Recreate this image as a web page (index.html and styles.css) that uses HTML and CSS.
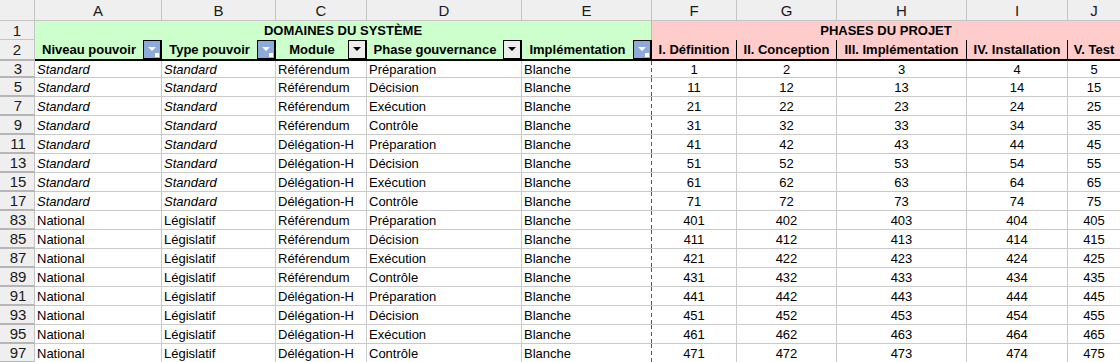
FILE: index.html
```html
<!DOCTYPE html>
<html lang="fr">
<head>
<meta charset="utf-8">
<title>Feuille</title>
<link rel="stylesheet" href="styles.css">
</head>
<body>
<div class="sheet">
  <div class="row colhdr">
    <div class="corner"></div>
    <div>A</div><div>B</div><div>C</div><div>D</div><div>E</div>
    <div>F</div><div>G</div><div>H</div><div>I</div><div class="last">J</div>
  </div>

  <div class="row r1">
    <div class="rh thin">1</div>
    <div class="title green">DOMAINES DU SYSTÈME</div>
    <div class="title pink last">PHASES DU PROJET</div>
  </div>

  <div class="row r2">
    <div class="rh">2</div>
    <div class="hc green"><span class="lbl">Niveau pouvoir</span><span class="dd on"></span></div>
    <div class="hc green"><span class="lbl">Type pouvoir</span><span class="dd on"></span></div>
    <div class="hc green"><span class="lbl">Module</span><span class="dd"></span></div>
    <div class="hc green"><span class="lbl">Phase gouvernance</span><span class="dd"></span></div>
    <div class="hc green"><span class="lbl">Implémentation</span><span class="dd on"></span></div>
    <div class="hc pink"><span class="lbl">I. Définition</span></div>
    <div class="hc pink"><span class="lbl">II. Conception</span></div>
    <div class="hc pink"><span class="lbl">III. Implémentation</span></div>
    <div class="hc pink"><span class="lbl">IV. Installation</span></div>
    <div class="hc pink last"><span class="lbl">V. Test</span></div>
  </div>

  <div class="row body first">
    <div class="rh">3</div><div class="it">Standard</div><div class="it">Standard</div><div>Référendum</div><div>Préparation</div><div class="pb">Blanche</div><div class="n">1</div><div class="n">2</div><div class="n">3</div><div class="n">4</div><div class="n last">5</div>
  </div>
  <div class="row body">
    <div class="rh">5</div><div class="it">Standard</div><div class="it">Standard</div><div>Référendum</div><div>Décision</div><div class="pb">Blanche</div><div class="n">11</div><div class="n">12</div><div class="n">13</div><div class="n">14</div><div class="n last">15</div>
  </div>
  <div class="row body">
    <div class="rh">7</div><div class="it">Standard</div><div class="it">Standard</div><div>Référendum</div><div>Exécution</div><div class="pb">Blanche</div><div class="n">21</div><div class="n">22</div><div class="n">23</div><div class="n">24</div><div class="n last">25</div>
  </div>
  <div class="row body">
    <div class="rh">9</div><div class="it">Standard</div><div class="it">Standard</div><div>Référendum</div><div>Contrôle</div><div class="pb">Blanche</div><div class="n">31</div><div class="n">32</div><div class="n">33</div><div class="n">34</div><div class="n last">35</div>
  </div>
  <div class="row body">
    <div class="rh">11</div><div class="it">Standard</div><div class="it">Standard</div><div>Délégation-H</div><div>Préparation</div><div class="pb">Blanche</div><div class="n">41</div><div class="n">42</div><div class="n">43</div><div class="n">44</div><div class="n last">45</div>
  </div>
  <div class="row body">
    <div class="rh">13</div><div class="it">Standard</div><div class="it">Standard</div><div>Délégation-H</div><div>Décision</div><div class="pb">Blanche</div><div class="n">51</div><div class="n">52</div><div class="n">53</div><div class="n">54</div><div class="n last">55</div>
  </div>
  <div class="row body">
    <div class="rh">15</div><div class="it">Standard</div><div class="it">Standard</div><div>Délégation-H</div><div>Exécution</div><div class="pb">Blanche</div><div class="n">61</div><div class="n">62</div><div class="n">63</div><div class="n">64</div><div class="n last">65</div>
  </div>
  <div class="row body">
    <div class="rh">17</div><div class="it">Standard</div><div class="it">Standard</div><div>Délégation-H</div><div>Contrôle</div><div class="pb">Blanche</div><div class="n">71</div><div class="n">72</div><div class="n">73</div><div class="n">74</div><div class="n last">75</div>
  </div>
  <div class="row body">
    <div class="rh">83</div><div>National</div><div>Législatif</div><div>Référendum</div><div>Préparation</div><div class="pb">Blanche</div><div class="n">401</div><div class="n">402</div><div class="n">403</div><div class="n">404</div><div class="n last">405</div>
  </div>
  <div class="row body">
    <div class="rh">85</div><div>National</div><div>Législatif</div><div>Référendum</div><div>Décision</div><div class="pb">Blanche</div><div class="n">411</div><div class="n">412</div><div class="n">413</div><div class="n">414</div><div class="n last">415</div>
  </div>
  <div class="row body">
    <div class="rh">87</div><div>National</div><div>Législatif</div><div>Référendum</div><div>Exécution</div><div class="pb">Blanche</div><div class="n">421</div><div class="n">422</div><div class="n">423</div><div class="n">424</div><div class="n last">425</div>
  </div>
  <div class="row body">
    <div class="rh">89</div><div>National</div><div>Législatif</div><div>Référendum</div><div>Contrôle</div><div class="pb">Blanche</div><div class="n">431</div><div class="n">432</div><div class="n">433</div><div class="n">434</div><div class="n last">435</div>
  </div>
  <div class="row body">
    <div class="rh">91</div><div>National</div><div>Législatif</div><div>Délégation-H</div><div>Préparation</div><div class="pb">Blanche</div><div class="n">441</div><div class="n">442</div><div class="n">443</div><div class="n">444</div><div class="n last">445</div>
  </div>
  <div class="row body">
    <div class="rh">93</div><div>National</div><div>Législatif</div><div>Délégation-H</div><div>Décision</div><div class="pb">Blanche</div><div class="n">451</div><div class="n">452</div><div class="n">453</div><div class="n">454</div><div class="n last">455</div>
  </div>
  <div class="row body">
    <div class="rh">95</div><div>National</div><div>Législatif</div><div>Délégation-H</div><div>Exécution</div><div class="pb">Blanche</div><div class="n">461</div><div class="n">462</div><div class="n">463</div><div class="n">464</div><div class="n last">465</div>
  </div>
  <div class="row body">
    <div class="rh">97</div><div>National</div><div>Législatif</div><div>Délégation-H</div><div>Contrôle</div><div class="pb">Blanche</div><div class="n">471</div><div class="n">472</div><div class="n">473</div><div class="n">474</div><div class="n last">475</div>
  </div>
</div>
</body>
</html>
```

FILE: styles.css
```css
html, body {
  margin: 0;
  padding: 0;
  background: #ffffff;
  overflow: hidden;
}

body {
  font-family: "Liberation Sans", Arial, sans-serif;
  font-size: 13px;
  color: #000000;
}

.sheet {
  width: 1120px;
  height: 362px;
  overflow: hidden;
}

.row {
  display: grid;
  grid-template-columns: 35px 127px 114px 91px 155px 130px 85px 100px 130px 101px 52px;
}

.row > div {
  box-sizing: border-box;
  display: flex;
  align-items: center;
  overflow: hidden;
  white-space: nowrap;
  min-width: 0;
}

/* column letters */
.colhdr {
  height: 21px;
  background: #efefef;
}

.colhdr > div {
  justify-content: center;
  font-size: 15px;
  color: #1a1a1a;
  border-right: 1px solid #c4c4c4;
  border-bottom: 1px solid #c4c4c4;
}

.colhdr > div.last {
  border-right: none;
}

/* row numbers */
.row > .rh {
  justify-content: center;
  background: #efefef;
  font-size: 15px;
  color: #1a1a1a;
  border-right: 1px solid #c4c4c4;
  border-bottom: 2px solid #b6b6b6;
}

.row > .rh.thin {
  border-bottom: 1px solid #c4c4c4;
}

/* row 1 : merged titles */
.r1 {
  height: 19px;
}

.row > .title {
  justify-content: center;
  font-weight: bold;
  font-size: 13px;
}

.r1 > .title.green {
  grid-column: 2 / 7;
  border-right: 1px solid #b8b8b8;
}

.r1 > .title.pink {
  grid-column: 7 / 12;
}

.green {
  background: #ccffcc;
}

.pink {
  background: #ffcccc;
}

/* row 2 : column headings with filter buttons */
.r2 {
  height: 21px;
}

.row > .hc {
  font-weight: bold;
  border-right: 1px solid #000000;
  border-bottom: 2px solid #000000;
  align-items: stretch;
}

.row > .hc.last {
  border-right: none;
}

.lbl {
  flex: 1;
  display: flex;
  align-items: center;
  justify-content: center;
  min-width: 0;
  overflow: hidden;
}

.dd {
  position: relative;
  flex: 0 0 18px;
  box-sizing: border-box;
  border: 1px solid #000000;
  background: #ececec;
  display: flex;
  justify-content: center;
  align-items: flex-start;
}

.dd::before {
  content: "";
  margin-top: 6px;
  width: 0;
  height: 0;
  border-left: 4px solid transparent;
  border-right: 4px solid transparent;
  border-top: 4px solid #000000;
}

.dd.on {
  background: #8eaadb;
}

.dd.on::before {
  border-top-color: #ffffff;
}

.dd.on::after {
  content: "";
  position: absolute;
  right: 1px;
  bottom: 1px;
  width: 4px;
  height: 4px;
  background: #ffffff;
}

/* body rows */
.body {
  height: 19px;
}

.body.first {
  height: 17px;
}

.body > div {
  padding-left: 2px;
  border-right: 1px solid #cacaca;
  border-bottom: 1px solid #cacaca;
}

.body > div.it {
  font-style: italic;
}

.body > div.n {
  justify-content: center;
  padding-left: 0;
}

.body > div.pb {
  border-right: none;
  background: repeating-linear-gradient(to bottom, #5a5a5a 0 4px, transparent 4px 7px) right top / 1px 100% no-repeat;
}

.body > div.last {
  border-right: none;
}
```
